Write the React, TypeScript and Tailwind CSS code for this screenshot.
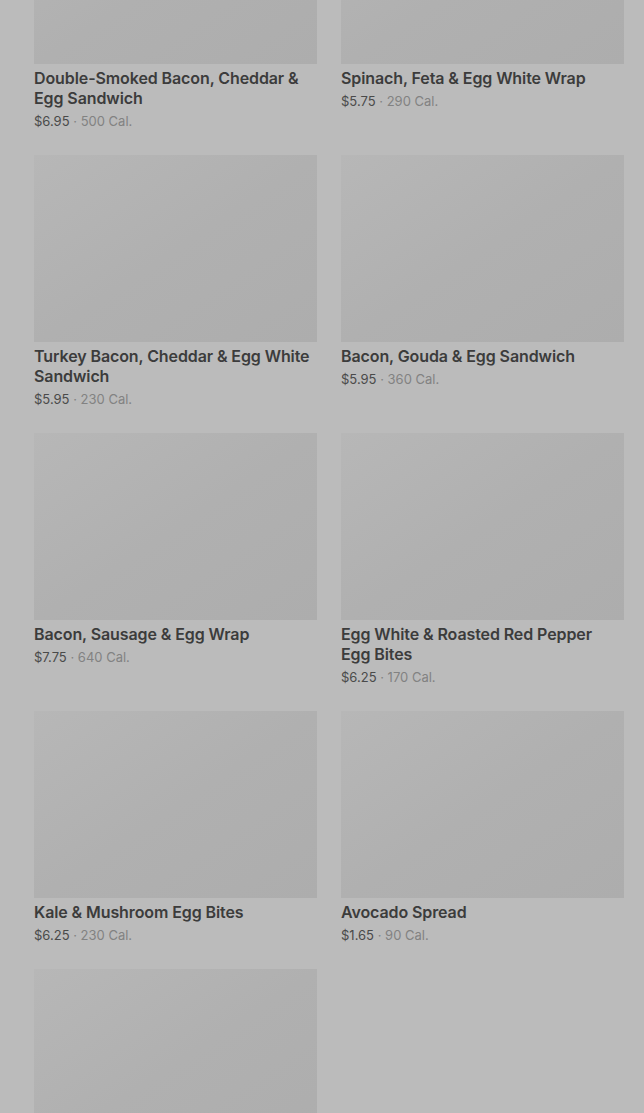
const items = [
  { name: "Double-Smoked Bacon, Cheddar & Egg Sandwich", price: "$6.95", cal: "500 Cal." },
  { name: "Spinach, Feta & Egg White Wrap", price: "$5.75", cal: "290 Cal." },
  { name: "Turkey Bacon, Cheddar & Egg White Sandwich", price: "$5.95", cal: "230 Cal." },
  { name: "Bacon, Gouda & Egg Sandwich", price: "$5.95", cal: "360 Cal." },
  { name: "Bacon, Sausage & Egg Wrap", price: "$7.75", cal: "640 Cal." },
  { name: "Egg White & Roasted Red Pepper Egg Bites", price: "$6.25", cal: "170 Cal." },
  { name: "Kale & Mushroom Egg Bites", price: "$6.25", cal: "230 Cal." },
  { name: "Avocado Spread", price: "$1.65", cal: "90 Cal." },
  { name: "", price: "", cal: "" },
];

function MenuCard({ name, price, cal }: { name: string; price: string; cal: string }) {
  return (
    <div>
      <div className="h-[187px] bg-gradient-to-br from-[#b7b7b7] via-[#b0b0b0] to-[#adadad]" />
      {name && (
        <>
          <h3 className="mt-1 text-[16px] leading-5 font-semibold tracking-[-0.1px] text-[#3c3c3c]">{name}</h3>
          <p className="mt-[3px] text-[13px] leading-5 text-[#828282]">
            <span className="text-[#4a4a4a]">{price}</span> · {cal}
          </p>
        </>
      )}
    </div>
  );
}

export default function App() {
  return (
    <div className="h-[1113px] overflow-hidden bg-[#bbbbbb] font-['Inter',sans-serif]">
      {/* menu grid, scrolled partway down */}
      <div className="-mt-[123px] grid grid-cols-2 gap-x-6 gap-y-6 pl-[34px] pr-5">
        {items.map((item, i) => (
          <MenuCard key={i} {...item} />
        ))}
      </div>
    </div>
  );
}
